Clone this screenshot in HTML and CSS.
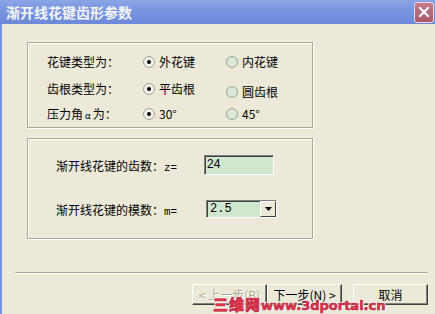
FILE: index.html
```html
<!DOCTYPE html>
<html lang="zh-CN">
<head>
    <meta charset="UTF-8">
    <title>渐开线花键齿形参数</title>
    <link rel="stylesheet" href="styles.css">
</head>
<body>
    <div class="window">
        <div class="titlebar">
            <span class="title">渐开线花键齿形参数</span>
            <span class="close">
                <svg width="12" height="12" viewBox="0 0 12 12"><path d="M2 2 L10 10 M10 2 L2 10" stroke="#fff" stroke-width="2.2" stroke-linecap="round"/></svg>
            </span>
        </div>
        <div class="client">
            <!-- 类型选择 -->
            <div class="group group-type">
                <span class="label">花键类型为：</span>
                <span class="radio"><i class="dot on"></i>外花键</span>
                <span class="radio"><i class="dot"></i>内花键</span>

                <span class="label">齿根类型为：</span>
                <span class="radio"><i class="dot on"></i>平齿根</span>
                <span class="radio low"><i class="dot"></i>圆齿根</span>

                <span class="label">压力角<small>α</small>为：</span>
                <span class="radio"><i class="dot on"></i>30°</span>
                <span class="radio"><i class="dot"></i>45°</span>
            </div>

            <!-- 参数输入 -->
            <div class="group group-param">
                <div class="param-row">
                    <span class="plabel">渐开线花键的齿数：<small>z=</small></span>
                    <span class="edit">24</span>
                </div>
                <div class="param-row">
                    <span class="plabel">渐开线花键的模数：<small>m=</small></span>
                    <span class="combo"><span class="combo-val">2.5</span><span class="combo-btn"><svg width="7" height="4" viewBox="0 0 7 4"><path d="M0 0 H7 L3.5 4 Z" fill="#000"/></svg></span></span>
                </div>
            </div>

            <div class="separator"></div>

            <div class="buttons">
                <span class="btn disabled">&lt; 上一步(B)</span>
                <span class="btn">下一步(N) &gt;</span>
                <span class="btn cancel">取消</span>
            </div>

            <div class="watermark"><b>三维网</b>www.3dportal.cn</div>
        </div>
    </div>
</body>
</html>
```

FILE: styles.css
```css
body { margin: 0; background: #ece9d8; }

.window {
    width: 435px; height: 314px;
    display: flex; flex-direction: column;
    font-family: "Noto Sans CJK SC", sans-serif;
    font-size: 12px; color: #000;
    overflow: hidden;
}

/* 标题栏 */
.titlebar {
    height: 24px; flex: none;
    display: flex; align-items: center; justify-content: space-between;
    padding: 0 1px 0 6px;
    background: linear-gradient(to bottom, #8ba6e6, #7794de 45%, #6b89d8);
}
.title { color: #f4f6fc; font-size: 14px; font-weight: bold; }
.close {
    width: 18px; height: 19px;
    display: flex; align-items: center; justify-content: center;
    border: 1px solid #e9d6de; border-radius: 3px;
    background: linear-gradient(to bottom, #c47c8a, #a9596a);
}

/* 客户区 */
.client {
    flex: 1;
    position: relative;
    background: #ece9d8;
    border-left: 2px solid #7391dc;
    padding: 18px 0 0 25px;
}

.group {
    box-sizing: border-box;
    width: 286px;
    border: 1px solid #aca899;
    box-shadow: 1px 1px 0 #fff, inset 1px 1px 0 #fff;
}

.group-type {
    height: 86px;
    display: grid;
    grid-template-columns: 96px 83px auto;
    grid-template-rows: 27px 25px 16px;
    padding: 11px 0 0 19px;
    align-items: start;
}
.label { line-height: 16px; }
.label small { font-size: 9px; margin: 0 2px; }
.radio { display: flex; align-items: center; gap: 4px; line-height: 16px; }
.radio.low { margin-top: 3px; }
.dot {
    box-sizing: border-box;
    width: 12px; height: 12px; border-radius: 50%;
    border: 1px solid #a0a092;
    background: #d9e8d8;
    position: relative;
}
.dot.on { background: #f3f3ee; }
.dot.on::after {
    content: ""; position: absolute;
    left: 3px; top: 3px; width: 4px; height: 4px;
    border-radius: 50%; background: #000;
}

.group-param {
    height: 101px;
    margin-top: 10px;
    padding: 16px 0 0 28px;
}
.param-row { display: flex; align-items: center; height: 20px; }
.param-row + .param-row { margin-top: 24px; }
.plabel { width: 146px; }
.plabel small { font-size: 11px; font-family: "Liberation Mono", monospace; }
.edit {
    box-sizing: border-box;
    width: 70px; height: 20px;
    margin-left: 2px;
    padding: 1px 2px;
    line-height: 15px;
    background: #cfe6cf;
    border: 1px solid; border-color: #7f7f7f #fff #fff #7f7f7f;
    box-shadow: inset 1px 1px 0 #404040;
    font-family: "Liberation Sans", sans-serif;
}
.combo {
    box-sizing: border-box;
    display: flex;
    width: 71px; height: 18px;
    margin-left: 4px;
    background: #cfe6cf;
    border: 1px solid; border-color: #7f7f7f #fff #fff #7f7f7f;
    box-shadow: inset 1px 1px 0 #404040;
}
.combo-val { flex: 1; padding: 1px 3px; line-height: 14px; font-family: "Liberation Mono", monospace; }
.combo-btn {
    box-sizing: border-box;
    width: 16px; height: 16px;
    display: flex; align-items: center; justify-content: center;
    background: #ece9d8;
    border: 1px solid; border-color: #fff #404040 #404040 #fff;
}

.separator {
    width: 413px;
    margin: 33px 0 0 -12px;
    border-top: 1px solid #aca899;
    border-bottom: 1px solid #fff;
}

.buttons { display: flex; margin: 10px 0 0 165px; }
.btn {
    box-sizing: border-box;
    width: 75px; height: 21px;
    display: flex; align-items: center; justify-content: center;
    border: 1px solid; border-color: #fff #404040 #404040 #fff;
    box-shadow: inset -1px -1px 0 #808080;
    background: #ece9d8;
}
.btn.disabled { color: #aca899; text-shadow: 1px 1px 0 #fff; }
.btn.cancel { margin-left: 11px; }

/* 水印 */
.watermark {
    position: absolute;
    left: 211px; top: 269px;
    font-family: "DejaVu Sans", sans-serif;
    font-weight: bold; font-size: 13px;
    letter-spacing: 0;
    color: #e5384f;
    -webkit-text-stroke: 0.6px #b01a30;
    text-shadow: 1px 0 0 #fff, -1px 0 0 #fff, 0 1px 0 #fff, 0 -1px 0 #fff, 1px 1px 0 #fff, -1px -1px 0 #fff;
}
.watermark b { font-family: "Noto Sans CJK SC", sans-serif; font-size: 15px; font-weight: 900; letter-spacing: 1px; }
```
